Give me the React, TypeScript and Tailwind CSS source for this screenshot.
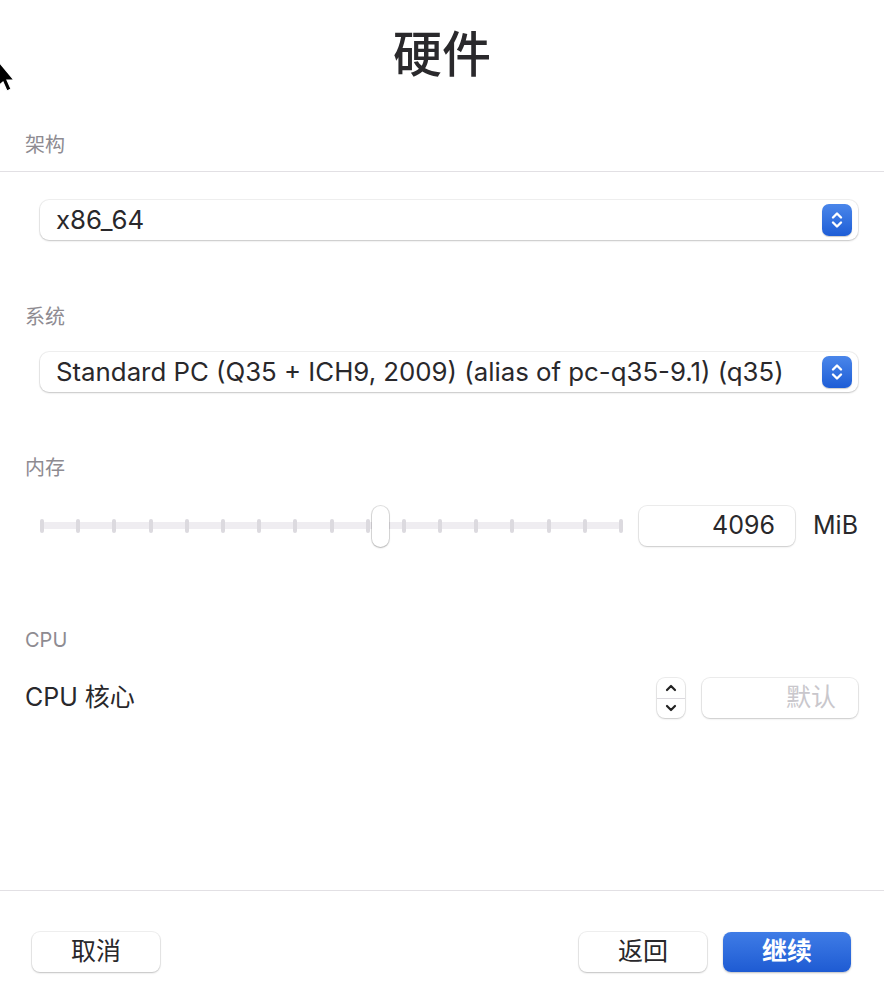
import React from "react";

const FONT = {
  fontFamily: 'Inter, "Noto Sans CJK SC", sans-serif',
};

function Label({ children, className = "" }: { children: React.ReactNode; className?: string }) {
  return (
    <div className={`h-6 pl-[25px] text-[20px] leading-6 text-[#8e8b91] ${className}`}>
      {children}
    </div>
  );
}

function BlueStepper() {
  return (
    <div className="flex h-[32px] w-[30px] items-center justify-center rounded-[7px] bg-gradient-to-b from-[#4a86ea] to-[#1d5dd6] shadow-[0_1px_1px_rgba(0,0,0,0.2)]">
      <svg width="14" height="22" viewBox="0 0 14 22" fill="none" stroke="white" strokeWidth="2.4" strokeLinecap="round" strokeLinejoin="round">
        <path d="M3 8.5 L7 4.5 L11 8.5" />
        <path d="M3 13.5 L7 17.5 L11 13.5" />
      </svg>
    </div>
  );
}

function Popup({ value }: { value: string }) {
  return (
    <div className="ml-[40px] mr-[26px] flex h-10 items-center justify-between rounded-[9px] bg-white pl-[16px] pr-[6px] shadow-[0_0_0_1px_rgba(0,0,0,0.06),0_1px_2px_rgba(0,0,0,0.18)]">
      <span className="text-[25.8px] text-[#29282b]">{value}</span>
      <BlueStepper />
    </div>
  );
}

function Button({ children, primary = false, className = "" }: { children: React.ReactNode; primary?: boolean; className?: string }) {
  return (
    <div
      className={`flex h-10 w-[128px] items-center justify-center rounded-[8px] text-[25px] ${
        primary
          ? "bg-gradient-to-b from-[#3f7ce6] to-[#1e5bd3] font-semibold text-white shadow-[0_1px_2px_rgba(0,0,0,0.25)]"
          : "bg-white text-[#29282b] shadow-[0_0_0_1px_rgba(0,0,0,0.06),0_1px_2px_rgba(0,0,0,0.2)]"
      } ${className}`}
    >
      {children}
    </div>
  );
}

export default function App() {
  const ticks = Array.from({ length: 17 }, (_, i) => i);

  return (
    <div className="relative flex h-[986px] w-[884px] flex-col overflow-hidden bg-white" style={FONT}>
      {/* mouse pointer */}
      <svg className="absolute left-0 top-[56px]" width="16" height="36" viewBox="0 0 16 36">
        <path d="M-6 0 L14 24 L7 24 L11 33 L7 35 L3 26 L-3 31 Z" fill="black" stroke="white" strokeWidth="1.2" />
      </svg>

      <div className="flex h-[110px] items-center justify-center text-[49px] font-medium text-[#2a292c]">硬件</div>

      <Label className="mt-[23px]">架构</Label>
      <div className="mt-[14px] border-t border-[#e2e0e4]" />

      <div className="mt-[28px]">
        <Popup value="x86_64" />
      </div>

      <Label className="mt-[65px]">系统</Label>
      <div className="mt-[23px]">
        <Popup value="Standard PC (Q35 + ICH9, 2009) (alias of pc-q35-9.1) (q35)" />
      </div>

      <Label className="mt-[64px]">内存</Label>
      <div className="mt-[26px] flex h-10 items-center pl-[40px] pr-[26px]">
        <div className="relative h-10 w-[584px]">
          <div className="absolute left-[2px] right-[2px] top-[16px] h-[7px] rounded-full bg-[#efedf1]" />
          <div className="absolute inset-x-0 top-[13px] flex justify-between">
            {ticks.map((t) => (
              <div key={t} className="h-[14px] w-[4px] rounded-full bg-[#dcdadf]" />
            ))}
          </div>
          <div className="absolute left-[332px] top-0 h-[41px] w-[17px] rounded-full bg-white shadow-[0_0_0_1px_rgba(0,0,0,0.12),0_1px_2px_rgba(0,0,0,0.2)]" />
        </div>
        <div className="ml-[16px] flex h-10 w-[156px] items-center justify-end rounded-[8px] bg-white pr-[20px] text-[25px] text-[#29282b] shadow-[0_0_0_1px_rgba(0,0,0,0.07),0_1px_2px_rgba(0,0,0,0.15)]">
          4096
        </div>
        <span className="ml-[18px] text-[25px] text-[#29282b]">MiB</span>
      </div>

      <Label className="mt-[82px]">CPU</Label>
      <div className="mt-[26px] flex h-10 items-center pl-[25px] pr-[26px]">
        <span className="text-[25px] text-[#29282b]">CPU 核心</span>
        <div className="ml-auto flex h-10 w-[28px] flex-col items-center justify-between rounded-[8px] bg-white py-[4px] shadow-[0_0_0_1px_rgba(0,0,0,0.07),0_1px_2px_rgba(0,0,0,0.15)]">
          <svg width="14" height="12" viewBox="0 0 14 12" fill="none" stroke="#222" strokeWidth="2.2" strokeLinecap="round" strokeLinejoin="round">
            <path d="M3 8 L7 4 L11 8" />
          </svg>
          <div className="h-px w-full bg-[#dcdadf]" />
          <svg width="14" height="12" viewBox="0 0 14 12" fill="none" stroke="#222" strokeWidth="2.2" strokeLinecap="round" strokeLinejoin="round">
            <path d="M3 4 L7 8 L11 4" />
          </svg>
        </div>
        <div className="ml-[17px] flex h-10 w-[156px] items-center justify-end rounded-[8px] bg-white pr-[22px] text-[25px] text-[#c9c7cc] shadow-[0_0_0_1px_rgba(0,0,0,0.07),0_1px_2px_rgba(0,0,0,0.15)]">
          默认
        </div>
      </div>

      <div className="mt-auto flex h-[96px] items-start border-t border-[#e2e0e4] pl-[32px] pr-[33px] pt-[41px]">
        <Button>取消</Button>
        <Button className="ml-auto">返回</Button>
        <Button primary className="ml-[16px] w-[127px]">继续</Button>
      </div>
    </div>
  );
}
